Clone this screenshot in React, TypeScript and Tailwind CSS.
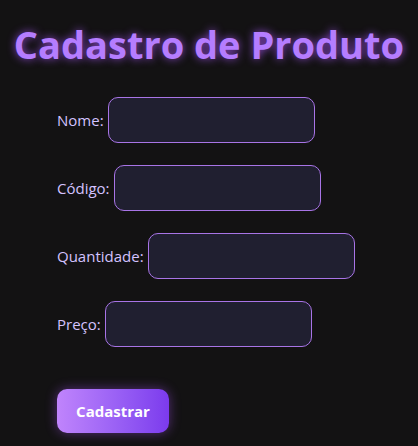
export default function App() {
  const fields = ["Nome:", "Código:", "Quantidade:", "Preço:"];
  return (
    <div
      className="min-h-[446px] w-full bg-[#131213] text-[#d4c2ff]"
      style={{ fontFamily: '"Open Sans", "Noto Sans", sans-serif' }}
    >
      <h1 className="pt-[20px] text-center text-[38px] leading-[48px] font-bold text-[#b57dff] [text-shadow:0_0_8px_rgba(168,85,247,0.8)]">
        Cadastro de Produto
      </h1>
      <form className="flex flex-col gap-[22px] pl-[57px] pt-[29px]">
        {fields.map((f) => (
          <div key={f} className="flex items-center gap-[4px]">
            <label className="text-[15px]">{f}</label>
            <input className="h-[46px] w-[207px] rounded-[10px] border border-[#a874e6] bg-[#201f30] outline-none" />
          </div>
        ))}
        <div className="pt-[20px]">
          <button
            type="button"
            className="h-[44px] w-[112px] rounded-[10px] bg-gradient-to-r from-[#c084fc] to-[#7c3aed] text-[15px] font-bold text-white shadow-[0_0_12px_rgba(168,85,247,0.45)]"
          >
            Cadastrar
          </button>
        </div>
      </form>
    </div>
  );
}
